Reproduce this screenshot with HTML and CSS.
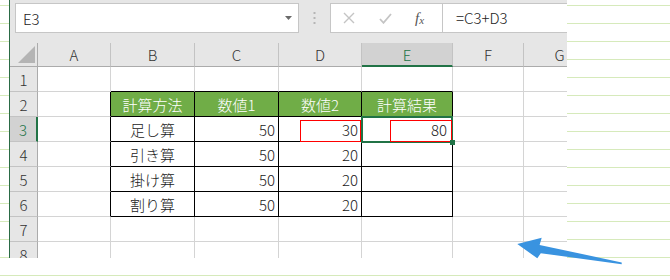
FILE: index.html
```html
<!DOCTYPE html>
<html lang="ja">
<head>
<meta charset="utf-8">
<title>Excel</title>
<link rel="stylesheet" href="styles.css">
</head>
<body>
<div class="page">
  <div class="strip"></div>
  <div class="excel">
    <div class="fbar">
      <div class="namebox">
        <span class="ref">E3</span>
        <svg class="dd" width="7" height="4" viewBox="0 0 7 4"><path d="M0 0H7L3.5 4Z" fill="#6a6a6a"/></svg>
      </div>
      <div class="dots">
        <svg width="3" height="12" viewBox="0 0 3 12"><rect x="0.5" y="0" width="2" height="2" fill="#b5b5b5"/><rect x="0.5" y="5" width="2" height="2" fill="#b5b5b5"/><rect x="0.5" y="10" width="2" height="2" fill="#b5b5b5"/></svg>
      </div>
      <div class="fbox">
        <div class="btns">
          <svg class="ico" width="12" height="12" viewBox="0 0 12 12"><path d="M1 1L11 11M11 1L1 11" stroke="#c4c4c4" stroke-width="1.4" fill="none"/></svg>
          <svg class="ico chk" width="13" height="11" viewBox="0 0 13 11"><path d="M1 6L4.5 9.8L12 1" stroke="#c4c4c4" stroke-width="1.8" fill="none"/></svg>
          <span class="fx"><i>f</i><sub>x</sub></span>
        </div>
        <div class="ftext">=C3+D3</div>
      </div>
    </div>
    <div class="grid">
      <div class="c corner"><svg width="17" height="17" viewBox="0 0 17 17"><path d="M0 17H17V0Z" fill="#b4b4b4"/></svg></div>
      <div class="c ch">A</div>
      <div class="c ch">B</div>
      <div class="c ch">C</div>
      <div class="c ch">D</div>
      <div class="c ch sel">E</div>
      <div class="c ch">F</div>
      <div class="c ch">G</div>

      <div class="c rh">1</div>
      <div class="c"></div>
      <div class="c tb"></div>
      <div class="c tb"></div>
      <div class="c tb"></div>
      <div class="c tb"></div>
      <div class="c"></div>
      <div class="c"></div>

      <div class="c rh">2</div>
      <div class="c tl"></div>
      <div class="c t th">計算方法</div>
      <div class="c t th">数値1</div>
      <div class="c t th">数値2</div>
      <div class="c t th">計算結果</div>
      <div class="c"></div>
      <div class="c"></div>

      <div class="c rh rsel">3</div>
      <div class="c tl"></div>
      <div class="c t ctr">足し算</div>
      <div class="c t num">50</div>
      <div class="c t num mark"><span class="red red-d"></span>30</div>
      <div class="c t num mark active"><span class="red red-e"></span>80</div>
      <div class="c"></div>
      <div class="c"></div>

      <div class="c rh">4</div>
      <div class="c tl"></div>
      <div class="c t ctr">引き算</div>
      <div class="c t num">50</div>
      <div class="c t num">20</div>
      <div class="c t"></div>
      <div class="c"></div>
      <div class="c"></div>

      <div class="c rh">5</div>
      <div class="c tl"></div>
      <div class="c t ctr">掛け算</div>
      <div class="c t num">50</div>
      <div class="c t num">20</div>
      <div class="c t"></div>
      <div class="c"></div>
      <div class="c"></div>

      <div class="c rh">6</div>
      <div class="c tl"></div>
      <div class="c t ctr">割り算</div>
      <div class="c t num">50</div>
      <div class="c t num">20</div>
      <div class="c t"></div>
      <div class="c"></div>
      <div class="c"></div>

      <div class="c rh">7</div>
      <div class="c"></div>
      <div class="c"></div>
      <div class="c"></div>
      <div class="c"></div>
      <div class="c"></div>
      <div class="c"></div>
      <div class="c"></div>

      <div class="c rh">8</div>
      <div class="c"></div>
      <div class="c"></div>
      <div class="c"></div>
      <div class="c"></div>
      <div class="c"></div>
      <div class="c"></div>
      <div class="c"></div>
    </div>
  </div>
  <svg class="arrow" width="670" height="280" viewBox="0 0 670 280">
    <path d="M517.3 244L541.7 237.7L539.6 245L621.7 262.4L621.7 264.2L540.8 253.2L537.3 258.3Z" fill="#3993e0"/>
  </svg>
</div>
</body>
</html>
```

FILE: styles.css
```css
html, body {
  margin: 0;
  padding: 0;
  width: 670px;
  height: 280px;
  overflow: hidden;
}
body {
  background: repeating-linear-gradient(to bottom, #ffffff 0, #ffffff 5px, #d6eabb 5px, #d6eabb 6px, #ffffff 6px, #ffffff 18px);
  font-family: "Noto Sans CJK JP", "Noto Sans", sans-serif;
  font-weight: 300;
  color: #1a1a1a;
}
.page {
  position: relative;
  width: 670px;
  height: 280px;
  display: flex;
  align-items: flex-start;
}
.strip {
  width: 9px;
  flex: none;
}
.excel {
  flex: none;
  width: 557px;
  height: 258px;
  border-left: 1px solid #2a6b45;
  background: #e6e6e6;
  overflow: hidden;
}
.fbar {
  height: 43px;
  box-sizing: border-box;
  padding: 3px 0 0 5px;
  display: flex;
  align-items: flex-start;
}
.namebox {
  flex: none;
  width: 284px;
  height: 30px;
  box-sizing: border-box;
  border: 1px solid #c6c6c6;
  background: #fff;
  display: flex;
  align-items: center;
  justify-content: space-between;
  padding: 0 6px 0 7px;
  font-size: 15px;
  color: #222;
}
.ref {
  line-height: 1;
}
.dots {
  flex: none;
  width: 31px;
  height: 30px;
  display: flex;
  align-items: center;
  justify-content: center;
}
.fbox {
  flex: none;
  width: 300px;
  height: 30px;
  box-sizing: border-box;
  border: 1px solid #c6c6c6;
  background: #fff;
  display: flex;
}
.btns {
  flex: none;
  width: 112px;
  box-sizing: border-box;
  border-right: 1px solid #c6c6c6;
  display: flex;
  align-items: center;
  padding-left: 12px;
}
.ico {
  flex: none;
}
.chk {
  margin-left: 24px;
}
.fx {
  margin-left: 23px;
  font-family: "Liberation Serif", "DejaVu Serif", serif;
  font-weight: 400;
  font-size: 15px;
  color: #555;
  line-height: 1;
}
.fx i {
  font-style: italic;
}
.fx sub {
  font-size: 11px;
  font-style: italic;
  vertical-align: -1px;
}
.ftext {
  padding-left: 13px;
  font-size: 15px;
  line-height: 27px;
  color: #222;
}
.grid {
  display: grid;
  grid-template-columns: 28px 73px 84px 84px 83px 91px 71px 72px;
  grid-template-rows: 24px repeat(8, 25px);
  width: 586px;
}
.c {
  box-sizing: border-box;
  border-right: 1px solid #d4d4d4;
  border-bottom: 1px solid #d4d4d4;
  background: #fff;
  display: flex;
  align-items: center;
  padding: 0 3px;
  font-size: 15px;
  line-height: 1;
  white-space: nowrap;
}
.corner {
  background: #e6e6e6;
  border-right: 1px solid #ababab;
  border-bottom: 1px solid #ababab;
  align-items: flex-end;
  justify-content: flex-end;
  padding: 0 2px 3px 0;
}
.ch {
  background: #e6e6e6;
  border-right: 1px solid #c3c3c3;
  border-bottom: 1px solid #ababab;
  justify-content: center;
  color: #333;
}
.ch.sel {
  background: #d2d2d2;
  color: #217346;
  border-bottom: 2px solid #217346;
}
.rh {
  background: #e6e6e6;
  border-right: 1px solid #ababab;
  border-bottom: 1px solid #c3c3c3;
  justify-content: center;
  color: #333;
}
.rh.rsel {
  background: #d2d2d2;
  color: #217346;
  border-right: 2px solid #217346;
}
.tb {
  border-bottom-color: #000;
}
.tl {
  border-right-color: #000;
}
.t {
  border-right-color: #000;
  border-bottom-color: #000;
}
.th {
  background: #70ad47;
  color: #fff;
  justify-content: center;
}
.ctr {
  justify-content: center;
}
.num {
  justify-content: flex-end;
}
.mark {
  position: relative;
}
.red {
  position: absolute;
  box-sizing: border-box;
  border: 1px solid #ff0000;
}
.red-d {
  left: 21px;
  top: 3px;
  width: 61px;
  height: 22px;
}
.red-e {
  left: 28px;
  top: 3px;
  width: 62px;
  height: 22px;
}
.active {
  padding-right: 5px;
}
.active::before {
  content: "";
  position: absolute;
  left: -1px;
  top: -1px;
  width: 92px;
  height: 27px;
  box-sizing: border-box;
  border: 2px solid #217346;
}
.active::after {
  content: "";
  position: absolute;
  left: 88px;
  top: 23px;
  width: 5px;
  height: 5px;
  background: #217346;
}
.arrow {
  position: absolute;
  left: 0;
  top: 0;
  pointer-events: none;
}
```
